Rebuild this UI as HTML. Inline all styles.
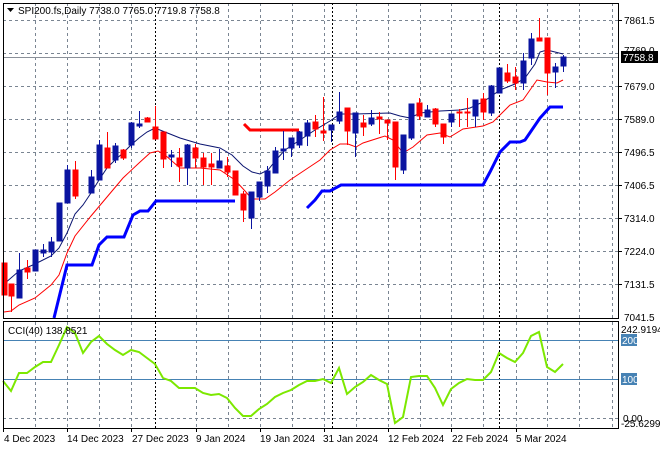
<!DOCTYPE html>
<html><head><meta charset="utf-8"><style>
body{margin:0;background:#fff;width:660px;height:450px;overflow:hidden}
svg{display:block;font-family:"Liberation Sans",sans-serif;font-size:10px}
.g{stroke:#7a8592;stroke-dasharray:3,3;stroke-width:1}
.k{stroke:#000;stroke-dasharray:2,2;stroke-width:1}
.b{stroke:#0a14a0;fill:#0a14a0}
.r{stroke:#ff0000;fill:#ff0000}
</style></head><body>
<svg width="660" height="450" viewBox="0 0 660 450">
<rect x="0" y="0" width="660" height="450" fill="#fff"/>
<g>
<line class="g" x1="3" x2="619" y1="20.5" y2="20.5"/><line class="g" x1="3" x2="619" y1="53.5" y2="53.5"/>
<line class="g" x1="3" x2="619" y1="86.5" y2="86.5"/><line class="g" x1="3" x2="619" y1="119.5" y2="119.5"/>
<line class="g" x1="3" x2="619" y1="152.5" y2="152.5"/><line class="g" x1="3" x2="619" y1="185.5" y2="185.5"/>
<line class="g" x1="3" x2="619" y1="218.5" y2="218.5"/><line class="g" x1="3" x2="619" y1="251.5" y2="251.5"/>
<line class="g" x1="3" x2="619" y1="284.5" y2="284.5"/>
<line class="g" x1="3" x2="619" y1="418.5" y2="418.5"/>
</g>
<g>
<path class="g" d="M35.5 3V318M67.5 3V318M99.5 3V318M131.5 3V318M196.5 3V318M228.5 3V318M260.5 3V318M292.5 3V318M324.5 3V318M356.5 3V318M388.5 3V318M420.5 3V318M451.5 3V318M483.5 3V318M516.5 3V318M547.5 3V318M579.5 3V318M612.5 3V318"/>
<path class="g" d="M35.5 322V428M67.5 322V428M99.5 322V428M131.5 322V428M196.5 322V428M228.5 322V428M260.5 322V428M292.5 322V428M324.5 322V428M356.5 322V428M388.5 322V428M420.5 322V428M451.5 322V428M483.5 322V428M516.5 322V428M547.5 322V428M579.5 322V428M612.5 322V428"/>
<path class="k" d="M155.5 3V318M332.5 3V318M499.5 3V318M155.5 322V428M332.5 322V428M499.5 322V428"/>
</g>
<line x1="3" x2="619" y1="57.5" y2="57.5" stroke="#8a9099"/>
<!-- CCI levels -->
<line x1="3" x2="619" y1="340.5" y2="340.5" stroke="#4682b4"/>
<line x1="3" x2="619" y1="379.5" y2="379.5" stroke="#4682b4"/>
<!-- MAs -->
<polyline fill="none" stroke="#ff0000" stroke-width="1" points="4,312 11,311 19,305 35,298 51,285 59,275 67,253 75,236 91,216 107,197 123,178 139,163 150,153 158,151 165,155 180,168 200,168 220,170 235,180 245,191 252,199 265,199 275,192 290,180 305,170 320,160 330,150 340,144 348,144 356,147 363,143 385,136 393,140 403,153 413,147 427,135 440,133 450,137 463,129 483,126 493,122 510,105 523,100 537,80 547,82 557,83 563,80"/>
<polyline fill="none" stroke="#0a1470" stroke-width="1" points="4,284 19,271 35,264 51,256 59,248 67,233 75,214 83,205 91,193 99,180 107,168 115,160 123,153 131,145 139,138 147,132 155,128 165,132 180,138 200,144 220,148 232,155 243,166 252,172 260,174 268,170 276,160 285,150 300,140 315,130 325,124 330,121 340,114 355,114 390,113 400,116 410,118 420,113 440,111 460,110 470,108 483,102 493,95 500,90 515,84 525,78 535,64 540,52 547,50 555,52 563,54"/>
<polyline fill="none" stroke="#0000ff" stroke-width="3" points="54,318 67,265 92,265 99,245 107,237 124,237 133,215 140,211 148,211 156,201 235,201"/>
<polyline fill="none" stroke="#0000ff" stroke-width="3" points="307,208 315,200 322,191 330,191 341,185 483,185 490,172 500,152 510,142 520,142 525,140 540,118 550,107 563,107"/>
<polyline fill="none" stroke="#ff0000" stroke-width="3" points="244,124 250,130 299,130"/>
<!-- candles -->
<g id="c"></g>
<g stroke-width="1">
<path class="r" d="M4.5 263V295M11.5 284V312M27.5 260V279M75.5 161V199M107.5 132V168M123.5 149V160M147.5 117V122M155.5 106V139M163.5 132V168M179.5 148V182M195.5 144V168M203.5 153V185M211.5 153V185M227.5 157V177M235.5 171V195M243.5 191V222M315.5 115V137M323.5 97V141M347.5 108V145M363.5 115V136M379.5 112V134M387.5 120V140M395.5 122V180M419.5 98V120M435.5 108V127M443.5 124V144M459.5 109V127M467.5 98V127M483.5 93V120M507.5 64V83M515.5 67V90M539.5 18V41M547.5 38V95"/>
<path class="b" d="M19.5 253V298M35.5 250V271M43.5 244V257M51.5 237V257M59.5 203V241M67.5 165V203M91.5 170V193M99.5 140V180M115.5 143V163M131.5 122V148M139.5 111V128M171.5 150V167M187.5 144V185M219.5 149V168M251.5 192V229M259.5 182V201M267.5 166V193M275.5 147V173M283.5 131V160M291.5 138V157M299.5 131V148M307.5 120V146M331.5 125V142M339.5 92V124M355.5 113V157M371.5 110V126M403.5 135V174M411.5 104V140M427.5 105V117M451.5 114V127M475.5 100V127M491.5 85V116M499.5 68V93M523.5 53V90M531.5 33V65M555.5 63V88M563.5 55V72"/>
</g>
<g class="r" stroke="none">
<rect x="2" y="263" width="5" height="32"/><rect x="9" y="284" width="5" height="12"/><rect x="25" y="268" width="5" height="4"/>
<rect x="73" y="170" width="5" height="26"/><rect x="105" y="148" width="5" height="20"/><rect x="121" y="150" width="5" height="8"/>
<rect x="145" y="118" width="5" height="4"/><rect x="153" y="127" width="5" height="12"/><rect x="161" y="132" width="5" height="27"/>
<rect x="177" y="158" width="5" height="8"/><rect x="193" y="148" width="5" height="10"/><rect x="201" y="158" width="5" height="9"/>
<rect x="209" y="164" width="5" height="3"/><rect x="225" y="166" width="5" height="6"/><rect x="233" y="171" width="5" height="24"/>
<rect x="241" y="194" width="5" height="16"/><rect x="313" y="122" width="5" height="7"/><rect x="321" y="131" width="5" height="2"/>
<rect x="345" y="108" width="5" height="23"/><rect x="361" y="123" width="5" height="4"/><rect x="377" y="117" width="5" height="2"/>
<rect x="385" y="120" width="5" height="3"/><rect x="393" y="122" width="5" height="45"/><rect x="417" y="103" width="5" height="13"/>
<rect x="433" y="109" width="5" height="15"/><rect x="441" y="124" width="5" height="13"/><rect x="457" y="112" width="5" height="1"/>
<rect x="465" y="112" width="5" height="1"/><rect x="481" y="99" width="5" height="13"/><rect x="505" y="73" width="5" height="8"/>
<rect x="513" y="77" width="5" height="6"/><rect x="537" y="38" width="5" height="3"/><rect x="545" y="38" width="5" height="35"/>
</g>
<g class="b" stroke="none">
<rect x="17" y="270" width="5" height="28"/><rect x="33" y="250" width="5" height="21"/><rect x="41" y="250" width="5" height="3"/>
<rect x="49" y="242" width="5" height="10"/><rect x="57" y="203" width="5" height="38"/><rect x="65" y="170" width="5" height="33"/>
<rect x="89" y="177" width="5" height="16"/><rect x="97" y="145" width="5" height="35"/><rect x="113" y="146" width="5" height="14"/>
<rect x="129" y="123" width="5" height="22"/><rect x="137" y="124" width="5" height="2"/><rect x="169" y="155" width="5" height="2"/>
<rect x="185" y="145" width="5" height="23"/><rect x="217" y="161" width="5" height="7"/><rect x="249" y="192" width="5" height="26"/>
<rect x="257" y="182" width="5" height="15"/><rect x="265" y="171" width="5" height="15"/><rect x="273" y="151" width="5" height="22"/>
<rect x="281" y="149" width="5" height="2"/><rect x="289" y="138" width="5" height="10"/><rect x="297" y="132" width="5" height="13"/>
<rect x="305" y="123" width="5" height="13"/><rect x="329" y="125" width="5" height="5"/><rect x="337" y="112" width="5" height="9"/>
<rect x="353" y="113" width="5" height="20"/><rect x="369" y="118" width="5" height="6"/><rect x="401" y="135" width="5" height="35"/>
<rect x="409" y="104" width="5" height="34"/><rect x="425" y="110" width="5" height="7"/><rect x="449" y="114" width="5" height="8"/>
<rect x="473" y="100" width="5" height="16"/><rect x="489" y="86" width="5" height="27"/><rect x="497" y="68" width="5" height="25"/>
<rect x="521" y="61" width="5" height="22"/><rect x="529" y="39" width="5" height="19"/><rect x="553" y="67" width="5" height="5"/>
<rect x="561" y="57" width="5" height="9"/>
</g>
<!-- CCI -->
<polyline fill="none" stroke="#7ce800" stroke-width="2" points="3,381 11,391 19,373 27,373 35,367 43,362 51,362 59,345 67,327 75,333 83,353 91,342 99,336 107,344 115,350 123,355 131,350 139,352 147,358 155,364 163,378 171,381 179,388 195,388 203,393 211,395 219,394 227,398 235,408 243,416 251,416 259,409 267,404 275,397 283,393 291,390 299,385 307,381 315,381 323,379 331,383 339,368 347,394 355,387 363,382 371,375 379,380 387,384 395,423 403,417 411,377 419,376 427,376 435,388 443,405 451,389 459,383 467,379 475,380 483,380 491,372 499,353 507,358 515,362 523,353 531,336 539,332 547,367 555,372 563,364"/>
<!-- borders -->
<rect x="3.5" y="3.5" width="615" height="315" fill="none" stroke="#000"/>
<rect x="3.5" y="321.5" width="615" height="107" fill="none" stroke="#000"/>
<!-- title -->
<path d="M7 8h7l-3.5 4z" fill="#000"/>
<text x="18" y="14" fill="#000">SPI200.fs,Daily  7738.0 7765.0 7719.8 7758.8</text>
<text x="8" y="334" fill="#000">CCI(40) 138.8521</text>
<!-- price axis -->
<g fill="#000">
<text x="624" y="24">7861.5</text>
<text x="624" y="90">7679.0</text>
<text x="624" y="123">7589.0</text>
<text x="624" y="156">7496.5</text>
<text x="624" y="189">7406.5</text>
<text x="624" y="222">7314.0</text>
<text x="624" y="255">7224.0</text>
<text x="624" y="288">7131.5</text>
<text x="624" y="321">7041.5</text>
<text x="624" y="54">7769.0</text>
</g>
<rect x="621" y="51" width="37" height="12" fill="#000"/>
<text x="623" y="61" fill="#fff">7758.8</text>
<text x="621" y="333" fill="#000">242.9194</text>
<rect x="621" y="334" width="16" height="12" fill="#4682b4"/><text x="622" y="344" fill="#fff">200</text>
<rect x="621" y="373" width="16" height="12" fill="#4682b4"/><text x="622" y="383" fill="#fff">100</text>
<text x="623" y="422" fill="#000">0.00</text>
<text x="621" y="427" fill="#000">-25.6299</text>
<path d="M619 20.5h3M619 86.5h3M619 119.5h3M619 152.5h3M619 185.5h3M619 218.5h3M619 251.5h3M619 284.5h3" stroke="#000"/>
<!-- dates -->
<path d="M3.5 428v4M67.5 428v4M131.5 428v4M196.5 428v4M260.5 428v4M324.5 428v4M388.5 428v4M451.5 428v4M516.5 428v4" stroke="#000"/>
<g fill="#000">
<text x="4" y="442">4 Dec 2023</text>
<text x="67" y="442">14 Dec 2023</text>
<text x="132" y="442">27 Dec 2023</text>
<text x="196" y="442">9 Jan 2024</text>
<text x="260" y="442">19 Jan 2024</text>
<text x="323" y="442">31 Jan 2024</text>
<text x="388" y="442">12 Feb 2024</text>
<text x="452" y="442">22 Feb 2024</text>
<text x="516" y="442">5 Mar 2024</text>
</g>
</svg>
</body></html>
